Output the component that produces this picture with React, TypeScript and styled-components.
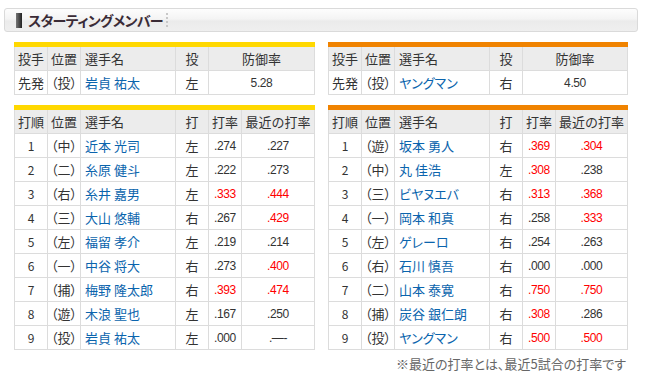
import React from "react";
import styled, { createGlobalStyle } from "styled-components";

const Global = createGlobalStyle`
  html, body { margin: 0; padding: 0; background: #fff; }
  body { font-family: "Noto Sans CJK JP", "Noto Sans", sans-serif; color: #333; }
`;

const Page = styled.div`
  width: 646px;
  padding: 8px 8px 0 4px;
  box-sizing: border-box;
`;

const TitleBar = styled.div`
  height: 24px;
  box-sizing: border-box;
  border: 1px solid #dadada;
  border-radius: 3px;
  background: linear-gradient(#fdfdfd 0%, #f4f4f4 45%, #ebebeb 55%, #efefef 100%);
  display: flex;
  align-items: center;
  padding-left: 11px;
`;

const TitleMark = styled.span`
  width: 6px;
  height: 15px;
  background: linear-gradient(to right, #777, #222);
`;

const TitleText = styled.h2`
  margin: 0 0 0 6px;
  font-size: 14px;
  font-weight: bold;
  color: #3a2b36;
  letter-spacing: -0.6px;
  line-height: 1;
  font-feature-settings: "palt";
`;

const TitleDots = styled.span`
  margin-left: 3px;
  width: 2px;
  height: 14px;
  background: repeating-linear-gradient(#c8c8c8 0 2px, transparent 2px 4px);
`;

const Columns = styled.div`
  display: grid;
  grid-template-columns: 301px 300px;
  column-gap: 13px;
  margin: 10px 0 0 10px;
`;

const Column = styled.div`
  display: flex;
  flex-direction: column;
  gap: 10px;
`;

const Block = styled.div<{ $color: string }>`
  border-top: 5px solid ${(p) => p.$color};
`;

const Table = styled.table`
  width: 100%;
  border-collapse: collapse;
  table-layout: fixed;
  font-size: 13px;
`;

const Th = styled.th<{ $left?: boolean }>`
  height: 23px;
  padding: 0 ${(p) => (p.$left ? "4px" : "0")};
  background: #ececec;
  border: 1px solid #dcdcdc;
  border-top: none;
  font-weight: normal;
  color: #333;
  text-align: ${(p) => (p.$left ? "left" : "center")};
  white-space: nowrap;
  overflow: hidden;
`;

const Td = styled.td`
  height: 23px;
  padding: 0;
  border: 1px solid #dcdcdc;
  text-align: center;
  color: #333;
  white-space: nowrap;
  overflow: hidden;
`;

const Pos = styled(Td)`
  font-feature-settings: "palt";
`;

const Name = styled(Td)`
  text-align: left;
  padding-left: 4px;
  color: #0a64ad;
  font-feature-settings: "palt";
`;

const Num = styled(Td)<{ $hot?: boolean }>`
  font-family: "Liberation Sans", Arial, sans-serif;
  font-size: 12px;
  letter-spacing: -0.4px;
  color: ${(p) => (p.$hot ? "#f00" : "#333")};
`;

const Order = styled(Td)`
  font-size: 12px;
`;

const Note = styled.p`
  margin: -6px 0 0;
  text-align: right;
  font-size: 13px;
  color: #666;
  padding-right: 2px;
  font-feature-settings: "palt";
`;

type Pitcher = { name: string; hand: string; era: string };
type Batter = { pos: string; name: string; hand: string; avg: string; recent: string; hotAvg?: boolean; hotRecent?: boolean };

const PitcherTable = ({ color, p }: { color: string; p: Pitcher }) => (
  <Block $color={color}>
    <Table>
      <colgroup>
        <col style={{ width: 33 }} />
        <col style={{ width: 33 }} />
        <col style={{ width: 95 }} />
        <col style={{ width: 33 }} />
        <col />
      </colgroup>
      <thead>
        <tr>
          <Th>投手</Th>
          <Th>位置</Th>
          <Th $left>選手名</Th>
          <Th>投</Th>
          <Th>防御率</Th>
        </tr>
      </thead>
      <tbody>
        <tr>
          <Td>先発</Td>
          <Pos>（投）</Pos>
          <Name>{p.name}</Name>
          <Td>{p.hand}</Td>
          <Num>{p.era}</Num>
        </tr>
      </tbody>
    </Table>
  </Block>
);

const BatterTable = ({ color, rows }: { color: string; rows: Batter[] }) => (
  <Block $color={color}>
    <Table>
      <colgroup>
        <col style={{ width: 33 }} />
        <col style={{ width: 33 }} />
        <col style={{ width: 95 }} />
        <col style={{ width: 33 }} />
        <col style={{ width: 33 }} />
        <col />
      </colgroup>
      <thead>
        <tr>
          <Th>打順</Th>
          <Th>位置</Th>
          <Th $left>選手名</Th>
          <Th>打</Th>
          <Th>打率</Th>
          <Th>最近の打率</Th>
        </tr>
      </thead>
      <tbody>
        {rows.map((r, i) => (
          <tr key={i}>
            <Order>{i + 1}</Order>
            <Pos>（{r.pos}）</Pos>
            <Name>{r.name}</Name>
            <Td>{r.hand}</Td>
            <Num $hot={r.hotAvg}>{r.avg}</Num>
            <Num $hot={r.hotRecent}>{r.recent}</Num>
          </tr>
        ))}
      </tbody>
    </Table>
  </Block>
);

const tigers: Batter[] = [
  { pos: "中", name: "近本 光司", hand: "左", avg: ".274", recent: ".227" },
  { pos: "二", name: "糸原 健斗", hand: "左", avg: ".222", recent: ".273" },
  { pos: "右", name: "糸井 嘉男", hand: "左", avg: ".333", recent: ".444", hotAvg: true, hotRecent: true },
  { pos: "三", name: "大山 悠輔", hand: "右", avg: ".267", recent: ".429", hotRecent: true },
  { pos: "左", name: "福留 孝介", hand: "左", avg: ".219", recent: ".214" },
  { pos: "一", name: "中谷 将大", hand: "右", avg: ".273", recent: ".400", hotRecent: true },
  { pos: "捕", name: "梅野 隆太郎", hand: "右", avg: ".393", recent: ".474", hotAvg: true, hotRecent: true },
  { pos: "遊", name: "木浪 聖也", hand: "左", avg: ".167", recent: ".250" },
  { pos: "投", name: "岩貞 祐太", hand: "左", avg: ".000", recent: ".―-" },
];

const carp: Batter[] = [
  { pos: "遊", name: "坂本 勇人", hand: "右", avg: ".369", recent: ".304", hotAvg: true, hotRecent: true },
  { pos: "中", name: "丸 佳浩", hand: "左", avg: ".308", recent: ".238", hotAvg: true },
  { pos: "三", name: "ビヤヌエバ", hand: "右", avg: ".313", recent: ".368", hotAvg: true, hotRecent: true },
  { pos: "一", name: "岡本 和真", hand: "右", avg: ".258", recent: ".333", hotRecent: true },
  { pos: "左", name: "ゲレーロ", hand: "右", avg: ".254", recent: ".263" },
  { pos: "右", name: "石川 慎吾", hand: "右", avg: ".000", recent: ".000" },
  { pos: "二", name: "山本 泰寛", hand: "右", avg: ".750", recent: ".750", hotAvg: true, hotRecent: true },
  { pos: "捕", name: "炭谷 銀仁朗", hand: "右", avg: ".308", recent: ".286", hotAvg: true },
  { pos: "投", name: "ヤングマン", hand: "右", avg: ".500", recent: ".500", hotAvg: true, hotRecent: true },
];

export default function App() {
  return (
    <Page>
      <Global />
      <TitleBar>
        <TitleMark />
        <TitleText>スターティングメンバー</TitleText>
        <TitleDots />
      </TitleBar>
      <Columns>
        <Column>
          <PitcherTable color="#ffd800" p={{ name: "岩貞 祐太", hand: "左", era: "5.28" }} />
          <BatterTable color="#ffd800" rows={tigers} />
        </Column>
        <Column>
          <PitcherTable color="#f08300" p={{ name: "ヤングマン", hand: "右", era: "4.50" }} />
          <BatterTable color="#f08300" rows={carp} />
          <Note>※最近の打率とは、最近5試合の打率です</Note>
        </Column>
      </Columns>
    </Page>
  );
}
